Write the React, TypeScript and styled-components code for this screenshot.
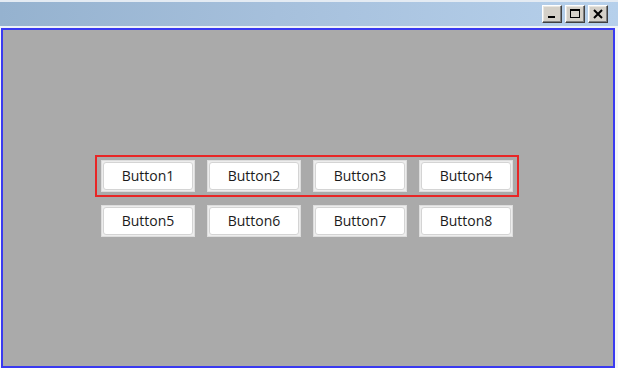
import React from "react";
import styled, { createGlobalStyle } from "styled-components";

const Global = createGlobalStyle`
  html, body { margin: 0; padding: 0; background: #ffffff; }
  body { width: 618px; height: 368px; overflow: hidden; font-family: "Open Sans", "Noto Sans", sans-serif; }
`;

const Window = styled.div`
  width: 618px;
  height: 368px;
  display: flex;
  flex-direction: column;
  background: #f3f6f9;
`;

const TitleBar = styled.div`
  box-sizing: content-box;
  height: 21px;
  border-top: 2px solid #e4ebf3;
  border-bottom: 2px solid #eef3f8;
  background: linear-gradient(to right, #95b2cf 0%, #a6c0dc 45%, #b6d0eb 100%);
  display: flex;
  align-items: flex-start;
  justify-content: flex-end;
  padding-right: 10px;
  padding-top: 3px;
  gap: 3px;
`;

const CaptionButton = styled.div`
  width: 20px;
  height: 18px;
  box-sizing: border-box;
  background: #d4d0c8;
  border-top: 1px solid #ffffff;
  border-left: 1px solid #ffffff;
  border-right: 1px solid #404040;
  border-bottom: 1px solid #404040;
  box-shadow: inset -1px -1px 0 #808080, inset 1px 1px 0 #e8e6e0;
  display: flex;
  align-items: center;
  justify-content: center;
`;

const Client = styled.div`
  flex: 1;
  margin: 0 3px 0 1px;
  border: 2px solid #3a3af0;
  background: #aaaaaa;
  padding: 125px 0 0 92px;
  display: flex;
  flex-direction: column;
  align-items: flex-start;
`;

const Highlight = styled.div`
  border: 2px solid #e82626;
  padding: 3px 4px;
  display: flex;
  gap: 12px;
`;

const Row = styled.div`
  display: flex;
  gap: 12px;
  margin: 8px 0 0 6px;
`;

const ButtonFrame = styled.div`
  width: 94px;
  height: 32px;
  box-sizing: border-box;
  background: #ededed;
  border: 1px solid #dddddd;
  padding: 1px;
  display: flex;
`;

const ButtonFace = styled.button`
  flex: 1;
  margin: 0;
  padding: 0;
  background: #ffffff;
  border: 1px solid #d4d4d4;
  border-radius: 3px;
  font-family: "Open Sans", "Noto Sans", sans-serif;
  font-size: 14px;
  color: #1b1b1b;
  display: flex;
  align-items: center;
  justify-content: center;
  line-height: 1;
`;

const Btn = ({ label }: { label: string }) => (
  <ButtonFrame>
    <ButtonFace>{label}</ButtonFace>
  </ButtonFrame>
);

export default function App() {
  return (
    <>
      <Global />
      <Window>
        <TitleBar>
          <CaptionButton>
            <svg width="14" height="12" viewBox="0 0 14 12">
              <rect x="3" y="8" width="7" height="2" fill="#000" />
            </svg>
          </CaptionButton>
          <CaptionButton>
            <svg width="14" height="12" viewBox="0 0 14 12">
              <rect x="2.5" y="1.5" width="9" height="8" fill="none" stroke="#000" strokeWidth="1" />
              <rect x="2" y="1" width="10" height="2" fill="#000" />
            </svg>
          </CaptionButton>
          <CaptionButton>
            <svg width="14" height="12" viewBox="0 0 14 12">
              <path d="M3 2 L11 10 M11 2 L3 10" stroke="#000" strokeWidth="2" />
            </svg>
          </CaptionButton>
        </TitleBar>
        <Client>
          <Highlight>
            <Btn label="Button1" />
            <Btn label="Button2" />
            <Btn label="Button3" />
            <Btn label="Button4" />
          </Highlight>
          <Row>
            <Btn label="Button5" />
            <Btn label="Button6" />
            <Btn label="Button7" />
            <Btn label="Button8" />
          </Row>
        </Client>
      </Window>
    </>
  );
}
